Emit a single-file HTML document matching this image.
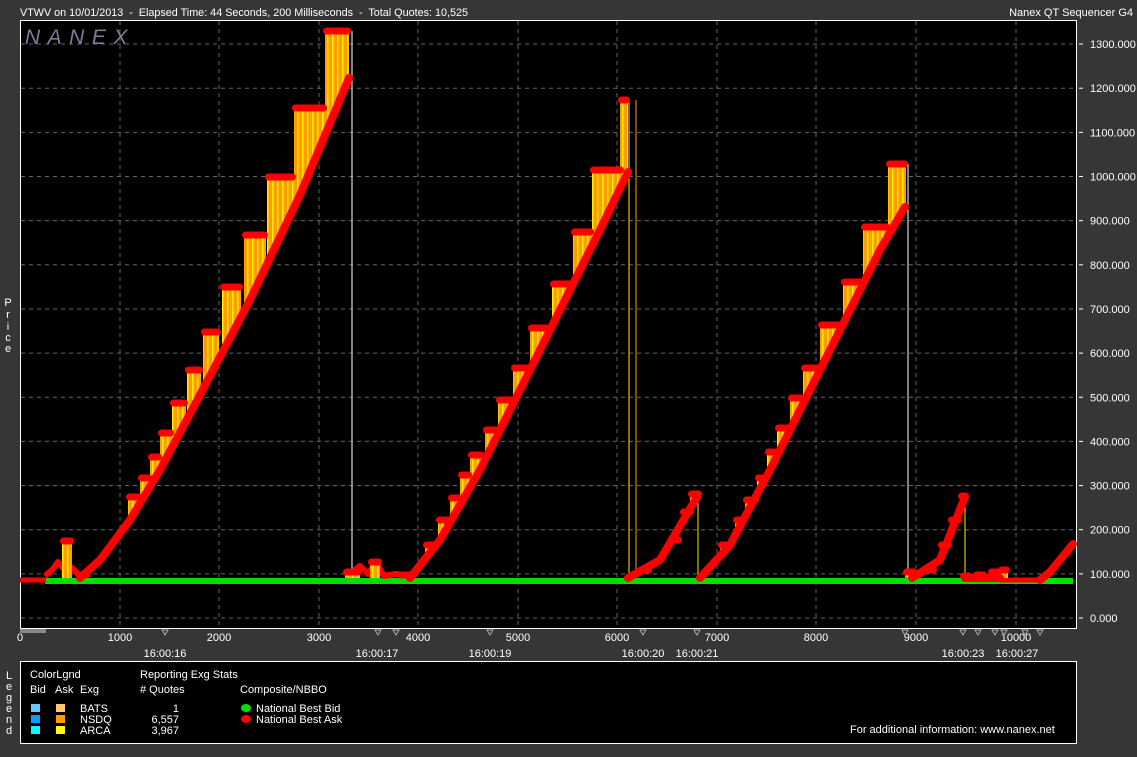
<!DOCTYPE html>
<html><head><meta charset="utf-8"><style>
body{margin:0;background:#363636;width:1137px;height:757px;overflow:hidden;font-family:"Liberation Sans",sans-serif;color:#fff}
svg{position:absolute;left:0;top:0}
</style></head><body>
<svg id="s" width="1137" height="757" xmlns="http://www.w3.org/2000/svg" font-family="Liberation Sans, sans-serif" font-size="11" fill="#fff">
<defs><pattern id="st" width="5" height="10" patternUnits="userSpaceOnUse"><rect width="5" height="10" fill="#ff9c00"/><rect x="2" width="1.5" height="10" fill="#ffea00"/></pattern></defs>
<text x="20" y="16" style="white-space:pre" textLength="448" lengthAdjust="spacingAndGlyphs">VTWV on 10/01/2013  -  Elapsed Time: 44 Seconds, 200 Milliseconds  -  Total Quotes: 10,525</text>
<text x="1133" y="16" text-anchor="end">Nanex QT Sequencer G4</text>
<rect x="20.5" y="20.5" width="1056" height="608" fill="#000" stroke="#fff"/>
<g id="grid" stroke="#666" stroke-dasharray="4,4"></g>
<text x="25" y="44" font-size="21" font-style="italic" fill="#7d7d9c" letter-spacing="7.5">NANEX</text>
<g id="data"></g>
<g id="ax" font-size="11"></g>
<g font-size="11" text-anchor="middle"><text x="8" y="306">P</text><text x="8" y="318">r</text><text x="8" y="330">i</text><text x="8" y="341">c</text><text x="8" y="352">e</text></g>
<g font-size="11" text-anchor="middle"><text x="9" y="679">L</text><text x="9" y="690">e</text><text x="9" y="701">g</text><text x="9" y="712">e</text><text x="9" y="723">n</text><text x="9" y="734">d</text></g>
<rect x="20.5" y="661.5" width="1056" height="82" fill="#000" stroke="#fff"/>
<text x="30" y="678">ColorLgnd</text><text x="140" y="678">Reporting Exg Stats</text>
<text x="30" y="693">Bid</text><text x="55" y="693">Ask</text><text x="80" y="693">Exg</text><text x="140" y="693"># Quotes</text><text x="240" y="693">Composite/NBBO</text>
<rect x="31" y="704" width="9" height="8" fill="#66c8ff"/><rect x="56" y="704" width="9" height="8" fill="#ffc870"/>
<rect x="31" y="715" width="9" height="8" fill="#00a0ff"/><rect x="56" y="715" width="9" height="8" fill="#ff9c00"/>
<rect x="31" y="726" width="9" height="8" fill="#00ffff"/><rect x="56" y="726" width="9" height="8" fill="#ffff00"/>
<text x="80" y="712">BATS</text><text x="80" y="723">NSDQ</text><text x="80" y="734">ARCA</text>
<g text-anchor="end"><text x="179" y="712">1</text><text x="179" y="723">6,557</text><text x="179" y="734">3,967</text></g>
<ellipse cx="246" cy="708" rx="5" ry="4" fill="#00e000"/><ellipse cx="246" cy="719" rx="5" ry="4" fill="#f00"/>
<text x="256" y="712">National Best Bid</text><text x="256" y="723">National Best Ask</text>
<text x="850" y="733">For additional information: www.nanex.net</text>
</svg>
<script>
const NS="http://www.w3.org/2000/svg";
function el(p,t,a,txt){const e=document.createElementNS(NS,t);for(const k in a)e.setAttribute(k,a[k]);if(txt)e.textContent=txt;p.appendChild(e);return e;}
const g=document.getElementById('grid'),ax=document.getElementById('ax'),d=document.getElementById('data');
const Y=v=>618-v*0.4415;
for(let i=1;i<=13;i++){el(g,'line',{x1:21,x2:1076,y1:Y(i*100),y2:Y(i*100)});}
el(g,'line',{x1:21,x2:1076,y1:618,y2:618});
const xs=[120,219,319,418,518,617,717,816,916,1016];
xs.forEach(x=>el(g,'line',{x1:x,x2:x,y1:21,y2:628}));
for(let i=0;i<=13;i++){const y=Y(i*100);el(ax,'line',{x1:1079,x2:1083,y1:y,y2:y,stroke:'#fff'});el(ax,'text',{x:1090,y:y+4},(i*100)+'.000');}
el(ax,'text',{x:20,y:641,'text-anchor':'middle'},'0');
xs.forEach((x,i)=>el(ax,'text',{x:x,y:641,'text-anchor':'middle'},String((i+1)*1000)));
[[165,'16:00:16'],[377,'16:00:17'],[490,'16:00:19'],[643,'16:00:20'],[697,'16:00:21'],[963,'16:00:23'],[1017,'16:00:27']].forEach(([x,t])=>el(ax,'text',{x:x,y:657,'text-anchor':'middle'},t));
[165,378,396,490,643,697,905,963,978,995,1004,1025,1040].forEach(x=>el(ax,'path',{d:`M${x-3} 630 L${x+3} 630 L${x} 635 Z`,fill:'none',stroke:'#aaa'}));
el(ax,'rect',{x:20,y:629,width:26,height:4,fill:'#888'});
function interp(pts,x){if(x<=pts[0][0])return 578;if(x>=pts[pts.length-1][0])return pts[pts.length-1][1];for(let i=0;i<pts.length-1;i++){if(x<=pts[i+1][0]){const[a,b]=pts[i],[c,e]=pts[i+1];return b+(e-b)*(x-a)/(c-a);}}return 578;}
function cycle(pts,steps){
 steps.forEach(([x1,x2,cy])=>{const y1=Math.min(interp(pts,x1),578),y2=Math.min(interp(pts,x2),578);
  el(d,'polygon',{points:`${x1},${cy} ${x2},${cy} ${x2},${Math.max(y2,cy)} ${x1},${Math.max(y1,cy)}`,fill:'url(#st)'});});
 steps.forEach(([x1,x2,cy])=>el(d,'rect',{x:x1-2,y:cy-3.5,width:x2-x1+4,height:7,rx:3.5,fill:'#f00'}));
 el(d,'polyline',{points:pts.map(p=>p.join(',')).join(' '),fill:'none',stroke:'#f00','stroke-width':8,'stroke-linejoin':'round','stroke-linecap':'round'});
}
el(d,'line',{x1:45,x2:1073,y1:581,y2:581,stroke:'#00e000','stroke-width':6});
el(d,'line',{x1:20,x2:46,y1:580,y2:580,stroke:'#f00','stroke-width':5});
el(d,'line',{x1:1000,x2:1040,y1:580,y2:580,stroke:'#f00','stroke-width':5});
el(d,'polyline',{points:'45,576 52,570 58,562 66,572 72,568 80,576 90,574',fill:'none',stroke:'#f00','stroke-width':6,'stroke-linejoin':'round'});
el(d,'polyline',{points:'345,576 352,572 360,566 368,574 376,562 384,576 395,574 410,576',fill:'none',stroke:'#f00','stroke-width':6,'stroke-linejoin':'round'});
el(d,'line',{x1:352,x2:352,y1:31,y2:578,stroke:'#fff'});
el(d,'line',{x1:636,x2:636,y1:100,y2:578,stroke:'#ff9c00'});
el(d,'line',{x1:629,x2:629,y1:100,y2:578,stroke:'#ffea00'});
el(d,'line',{x1:908,x2:908,y1:164,y2:578,stroke:'#fff'});
el(d,'line',{x1:698,x2:698,y1:494,y2:575,stroke:'#ffea00'});
el(d,'line',{x1:965,x2:965,y1:496,y2:575,stroke:'#ffea00'});
cycle([[80,578],[100,560],[130,520],[160,470],[200,395],[250,300],[300,195],[349,78]],
 [[62,72,541],[128,140,497],[140,150,478],[150,160,457],[160,172,433],[172,186,403],[187,201,370],[203,219,332],[222,241,287],[244,266,235],[267,294,177],[294,325,108],[325,349,31]]);
cycle([[410,578],[440,540],[480,470],[520,390],[560,310],[600,230],[628,172]],
 [[345,360,572],[370,380,562],[400,415,575],[425,435,545],[438,448,520],[450,460,498],[460,470,475],[470,482,455],[485,497,430],[498,512,400],[513,528,368],[530,548,328],[552,572,284],[573,592,232],[592,622,170],[620,628,100]]);
cycle([[628,578],[660,560],[697,497]],[[640,650,570],[670,680,540],[682,692,512],[690,700,494]]);
cycle([[700,578],[730,545],[770,470],[810,390],[850,310],[880,250],[905,207]],
 [[720,730,545],[735,745,520],[745,757,500],[757,768,478],[767,778,452],[777,790,428],[790,803,398],[803,818,368],[820,840,325],[843,862,282],[863,888,227],[888,906,164]]);
cycle([[912,578],[940,560],[965,497]],[[905,915,572],[925,935,570],[940,950,545],[950,960,520],[960,967,496]]);
cycle([[965,578],[1000,578]],[[962,970,576],[975,985,575],[990,1000,572],[1000,1008,570]]);
el(d,'polyline',{points:'1040,580 1050,572 1073,544',fill:'none',stroke:'#f00','stroke-width':8,'stroke-linecap':'round'});
</script>
</body></html>
